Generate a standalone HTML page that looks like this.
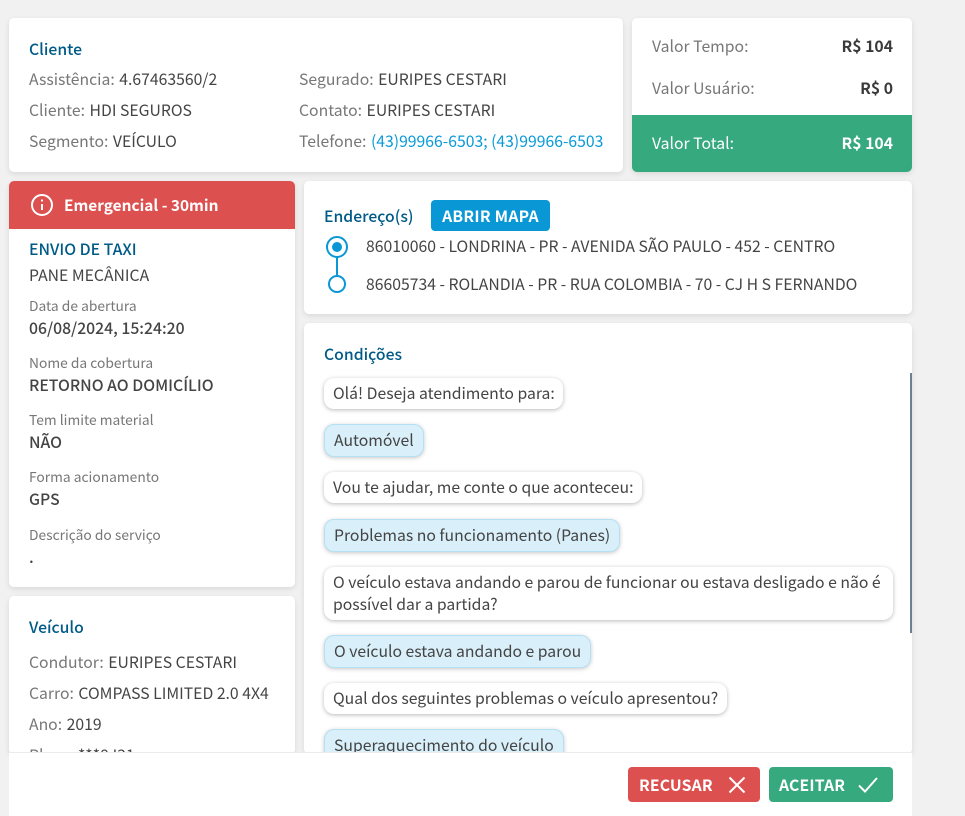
<!DOCTYPE html>
<html lang="pt"><head><meta charset="utf-8"><title>Serviço</title>
<style>
html,body{margin:0;padding:0;width:965px;height:816px;overflow:hidden;background:#f1f1f1}
body{position:relative;font-family:"Noto Sans CJK SC","Liberation Sans",sans-serif;font-size:15.75px;color:#444;}
.card{position:absolute;background:#fff;border-radius:5px;box-shadow:0 2px 6px rgba(0,0,0,.1);overflow:hidden}
.t{position:absolute;line-height:20px;white-space:nowrap;margin-top:-1px}
.g{color:#777}.h{color:#005a87;font-weight:500}
.t>.g{margin-right:1px}
.b{font-weight:700;color:#3a3a3a}.m{font-weight:500}
.s{font-size:13.8px;color:#777;margin-top:0}
.bub{position:absolute;left:324px;box-sizing:border-box;background:#fff;border-radius:10px;box-shadow:0 1px 4px rgba(0,0,0,.28);padding:4px 0 0 9px;line-height:21px;color:#444;white-space:nowrap}
.a{background:#d9eff9;border:1px solid #b5e0f4;padding:4px 9px 0 9px;box-shadow:0 1px 4px rgba(0,0,0,.22)}
.btn{position:absolute;top:767px;height:35px;border-radius:4px;color:#fff;font-weight:700;line-height:35px;letter-spacing:.15px}
</style></head><body>

<div class="card" style="left:9px;top:18px;width:614px;height:154px"></div>
<div class="t h" style="left:29px;top:40px">Cliente</div>
<div class="t" style="left:29px;top:70px"><span class="g">Assistência:</span> 4.67463560/2</div>
<div class="t" style="left:29px;top:101px"><span class="g">Cliente:</span> HDI SEGUROS</div>
<div class="t" style="left:29px;top:132px"><span class="g">Segmento:</span> VEÍCULO</div>
<div class="t" style="left:299px;top:70px"><span class="g">Segurado:</span> EURIPES CESTARI</div>
<div class="t" style="left:299px;top:101px"><span class="g">Contato:</span> EURIPES CESTARI</div>
<div class="t" style="left:299px;top:132px"><span class="g">Telefone:</span> <span style="color:#0a9ad8">(43)99966-6503; (43)99966-6503</span></div>

<div class="card" style="left:632px;top:18px;width:280px;height:154px">
<div style="position:absolute;left:0;top:97px;width:280px;height:57px;background:#36a97f"></div></div>
<div class="t g" style="left:652px;top:37px">Valor Tempo:</div>
<div class="t b" style="right:72px;top:37px">R$ 104</div>
<div class="t g" style="left:652px;top:79px">Valor Usuário:</div>
<div class="t b" style="right:72px;top:79px">R$ 0</div>
<div class="t" style="left:652px;top:134px;color:#fff">Valor Total:</div>
<div class="t" style="right:72px;top:134px;color:#fff;font-weight:700">R$ 104</div>

<div class="card" style="left:9px;top:181px;width:286px;height:406px">
<div style="height:48px;background:#dc5050"></div></div>
<svg style="position:absolute;left:30px;top:193px" width="24" height="24" viewBox="0 0 24 24" fill="none" stroke="#fff" stroke-width="2"><circle cx="12" cy="12" r="10"/><path d="M12 11v6"/><circle cx="12" cy="7.5" r=".6" fill="#fff" stroke-width="1"/></svg>
<div class="t" style="left:64px;top:196px;color:#fff;font-weight:700;font-size:15.4px">Emergencial - 30min</div>
<div class="t h" style="left:29px;top:240px">ENVIO DE TAXI</div>
<div class="t" style="left:29px;top:266px">PANE MECÂNICA</div>
<div class="t s" style="left:29px;top:295px">Data de abertura</div>
<div class="t m" style="left:29px;top:319px">06/08/2024, 15:24:20</div>
<div class="t s" style="left:29px;top:352px">Nome da cobertura</div>
<div class="t m" style="left:29px;top:376px">RETORNO AO DOMICÍLIO</div>
<div class="t s" style="left:29px;top:409px">Tem limite material</div>
<div class="t m" style="left:29px;top:433px">NÃO</div>
<div class="t s" style="left:29px;top:466px">Forma acionamento</div>
<div class="t m" style="left:29px;top:490px">GPS</div>
<div class="t s" style="left:29px;top:524px">Descrição do serviço</div>
<div class="t m" style="left:29px;top:548px">.</div>

<div class="card" style="left:9px;top:596px;width:286px;height:158px"></div>
<div class="t h" style="left:29px;top:618px">Veículo</div>
<div class="t" style="left:29px;top:653px"><span class="g">Condutor:</span> EURIPES CESTARI</div>
<div class="t" style="left:29px;top:684px"><span class="g">Carro:</span> COMPASS LIMITED 2.0 4X4</div>
<div class="t" style="left:29px;top:715px"><span class="g">Ano:</span> 2019</div>
<div class="t" style="left:29px;top:746px"><span class="g">Placa:</span> ***8J31</div>

<div class="card" style="left:304px;top:181px;width:608px;height:133px"></div>
<div class="t h" style="left:324px;top:207px">Endereço(s)</div>
<div style="position:absolute;left:431px;top:200px;width:119px;height:31px;background:#0a97d6;border-radius:4px;color:#fff;font-weight:700;text-align:center;line-height:31px;letter-spacing:.25px">ABRIR MAPA</div>
<svg style="position:absolute;left:324px;top:234px" width="28" height="64" viewBox="0 0 28 64" fill="none" stroke="#0a97d6" stroke-width="2"><circle cx="13" cy="13" r="10"/><circle cx="13" cy="13" r="5" fill="#0a97d6" stroke="none"/><path d="M13 23v18"/><circle cx="13" cy="50" r="8"/></svg>
<div class="t" style="left:366px;top:237px">86010060 - LONDRINA - PR - AVENIDA SÃO PAULO - 452 - CENTRO</div>
<div class="t" style="left:366px;top:275px">86605734 - ROLANDIA - PR - RUA COLOMBIA - 70 - CJ H S FERNANDO</div>

<div class="card" style="left:304px;top:323px;width:608px;height:431px"></div>
<div class="t h" style="left:324px;top:345px">Condições</div>
<div style="position:absolute;left:910px;top:373px;width:2px;height:260px;background:#6d7f96"></div>
<div class="bub" style="top:378px;height:31px;width:239px">Olá! Deseja atendimento para:</div>
<div class="bub a" style="top:424px;height:33px">Automóvel</div>
<div class="bub" style="top:472px;height:31px;width:318px">Vou te ajudar, me conte o que aconteceu:</div>
<div class="bub a" style="top:519px;height:33px">Problemas no funcionamento (Panes)</div>
<div class="bub" style="top:567px;width:569px;height:53px;line-height:22px;padding-top:4px;white-space:normal">O veículo estava andando e parou de funcionar ou estava desligado e não é possível dar a partida?</div>
<div class="bub a" style="top:635px;height:33px">O veículo estava andando e parou</div>
<div class="bub" style="top:683px;height:31px;width:403px">Qual dos seguintes problemas o veículo apresentou?</div>
<div class="bub a" style="top:729px;height:33px">Superaquecimento do veículo</div>

<div style="position:absolute;left:9px;top:752px;width:903px;height:64px;background:#fff;border-top:1px solid #ececec;box-sizing:border-box"></div>
<div class="btn" style="left:628px;width:132px;background:#dc5050"><span style="position:absolute;left:11px">RECUSAR</span>
<svg style="position:absolute;left:100px;top:9px" width="18" height="18" viewBox="0 0 18 18" fill="none" stroke="#fff" stroke-width="2"><path d="M1.5 1.5l15 15M16.5 1.5l-15 15"/></svg></div>
<div class="btn" style="left:769px;width:124px;background:#36a97f"><span style="position:absolute;left:10px">ACEITAR</span>
<svg style="position:absolute;left:89px;top:9px" width="20" height="18" viewBox="0 0 20 18" fill="none" stroke="#fff" stroke-width="2"><path d="M1 9.5l6 6L19 2"/></svg></div>
</body></html>
